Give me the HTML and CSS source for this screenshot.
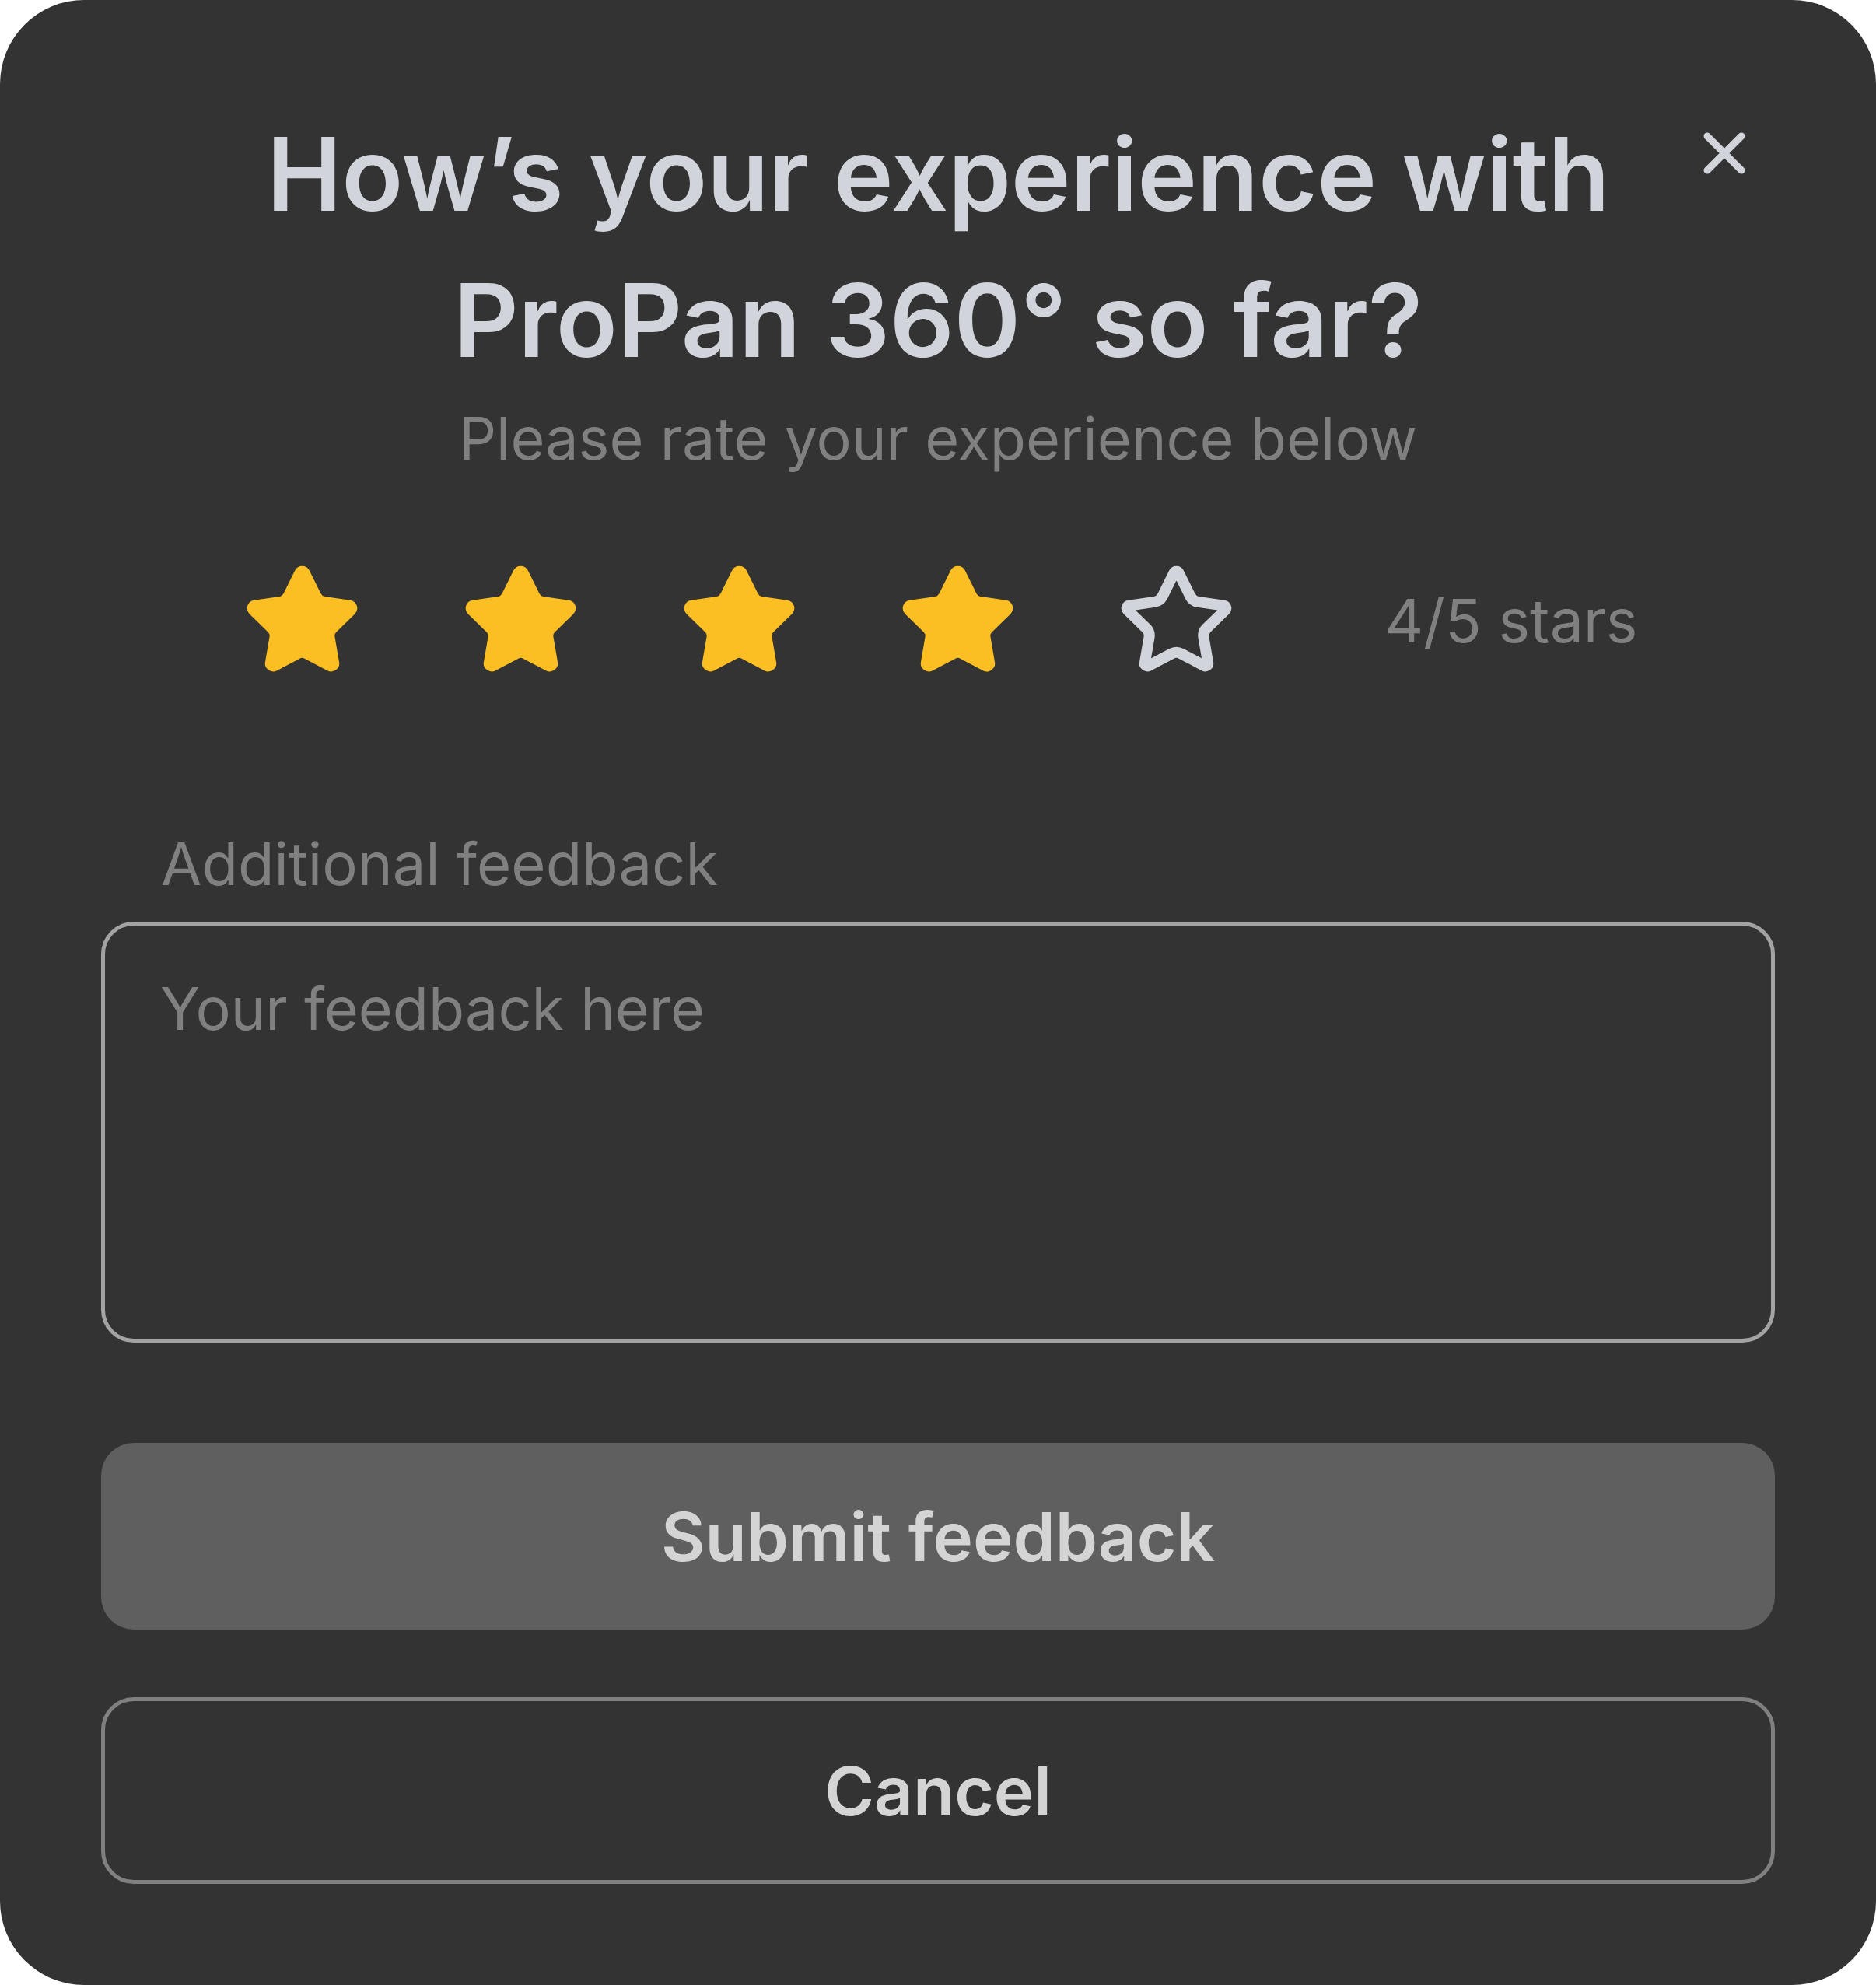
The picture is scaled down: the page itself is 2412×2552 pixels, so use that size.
FILE: index.html
```html
<!DOCTYPE html>
<html lang="en">
<head>
<meta charset="utf-8">
<title>Feedback</title>
<link rel="stylesheet" href="styles.css">
</head>
<body>
<div class="card">
  <button class="close" aria-label="Close">
    <svg viewBox="0 0 60 60" width="60" height="60"><path d="M8 8 52 52M52 8 8 52"/></svg>
  </button>
  <h1 class="title">How’s your experience with<br>ProPan 360° so far?</h1>
  <p class="subtitle">Please rate your experience below</p>
  <div class="rating">
    <div class="stars">
      <svg class="star filled" viewBox="0 0 24 24"><path d="M11.525 2.295a.53.53 0 0 1 .95 0l2.31 4.679a2.123 2.123 0 0 0 1.595 1.16l5.166.756a.53.53 0 0 1 .294.904l-3.736 3.638a2.123 2.123 0 0 0-.611 1.878l.882 5.14a.53.53 0 0 1-.771.56l-4.618-2.428a2.122 2.122 0 0 0-1.973 0L6.396 21.01a.53.53 0 0 1-.77-.56l.881-5.139a2.122 2.122 0 0 0-.611-1.879L2.16 9.795a.53.53 0 0 1 .294-.906l5.165-.755a2.122 2.122 0 0 0 1.597-1.160z"/></svg>
      <svg class="star filled" viewBox="0 0 24 24"><path d="M11.525 2.295a.53.53 0 0 1 .95 0l2.31 4.679a2.123 2.123 0 0 0 1.595 1.16l5.166.756a.53.53 0 0 1 .294.904l-3.736 3.638a2.123 2.123 0 0 0-.611 1.878l.882 5.14a.53.53 0 0 1-.771.56l-4.618-2.428a2.122 2.122 0 0 0-1.973 0L6.396 21.01a.53.53 0 0 1-.77-.56l.881-5.139a2.122 2.122 0 0 0-.611-1.879L2.16 9.795a.53.53 0 0 1 .294-.906l5.165-.755a2.122 2.122 0 0 0 1.597-1.160z"/></svg>
      <svg class="star filled" viewBox="0 0 24 24"><path d="M11.525 2.295a.53.53 0 0 1 .95 0l2.31 4.679a2.123 2.123 0 0 0 1.595 1.16l5.166.756a.53.53 0 0 1 .294.904l-3.736 3.638a2.123 2.123 0 0 0-.611 1.878l.882 5.14a.53.53 0 0 1-.771.56l-4.618-2.428a2.122 2.122 0 0 0-1.973 0L6.396 21.01a.53.53 0 0 1-.77-.56l.881-5.139a2.122 2.122 0 0 0-.611-1.879L2.16 9.795a.53.53 0 0 1 .294-.906l5.165-.755a2.122 2.122 0 0 0 1.597-1.160z"/></svg>
      <svg class="star filled" viewBox="0 0 24 24"><path d="M11.525 2.295a.53.53 0 0 1 .95 0l2.31 4.679a2.123 2.123 0 0 0 1.595 1.16l5.166.756a.53.53 0 0 1 .294.904l-3.736 3.638a2.123 2.123 0 0 0-.611 1.878l.882 5.14a.53.53 0 0 1-.771.56l-4.618-2.428a2.122 2.122 0 0 0-1.973 0L6.396 21.01a.53.53 0 0 1-.77-.56l.881-5.139a2.122 2.122 0 0 0-.611-1.879L2.16 9.795a.53.53 0 0 1 .294-.906l5.165-.755a2.122 2.122 0 0 0 1.597-1.160z"/></svg>
      <svg class="star empty" viewBox="0 0 24 24"><path d="M11.525 2.295a.53.53 0 0 1 .95 0l2.31 4.679a2.123 2.123 0 0 0 1.595 1.16l5.166.756a.53.53 0 0 1 .294.904l-3.736 3.638a2.123 2.123 0 0 0-.611 1.878l.882 5.14a.53.53 0 0 1-.771.56l-4.618-2.428a2.122 2.122 0 0 0-1.973 0L6.396 21.01a.53.53 0 0 1-.77-.56l.881-5.139a2.122 2.122 0 0 0-.611-1.879L2.16 9.795a.53.53 0 0 1 .294-.906l5.165-.755a2.122 2.122 0 0 0 1.597-1.160z"/></svg>
    </div>
    <span class="rating-text">4/5 stars</span>
  </div>
  <label class="field-label" for="fb">Additional feedback</label>
  <textarea id="fb" class="feedback" placeholder="Your feedback here"></textarea>
  <button class="btn btn-primary">Submit feedback</button>
  <button class="btn btn-secondary">Cancel</button>
</div>
</body>
</html>
```
FILE: styles.css
```css
html, body {
  margin: 0;
  background: #ffffff;
}

.card {
  position: relative;
  box-sizing: border-box;
  width: 2412px;
  height: 2552px;
  padding: 130px;
  background: #333333;
  border-radius: 108px;
  display: flex;
  flex-direction: column;
  font-family: Inter, "Noto Sans", sans-serif;
}

.close {
  position: absolute;
  top: 167px;
  right: 165px;
  width: 60px;
  height: 60px;
  padding: 0;
  border: none;
  background: none;
  cursor: pointer;
}

.close svg {
  display: block;
  fill: none;
  stroke: #D1D5DB;
  stroke-width: 9;
  stroke-linecap: round;
}

.title {
  margin: 0;
  font-size: 130px;
  line-height: 188px;
  font-weight: 600;
  letter-spacing: -0.4px;
  color: #D1D5DB;
  text-align: center;
}

.subtitle {
  margin: 0;
  font-size: 75.5px;
  line-height: 116px;
  color: #808080;
  text-align: center;
}

.rating {
  display: flex;
  align-items: center;
  justify-content: center;
  gap: 191px;
  padding-left: 6px;
  margin-top: 100px;
}

.stars {
  display: flex;
  gap: 128px;
}

.star {
  display: block;
  width: 153px;
  height: 153px;
  stroke-width: 2.2;
  stroke-linejoin: round;
  stroke-linecap: round;
}

.star.filled {
  fill: #FBBF24;
  stroke: #FBBF24;
}

.star.empty {
  fill: none;
  stroke: #D1D5DB;
}

.rating-text {
  font-size: 77px;
  line-height: 93px;
  color: #808080;
}

.field-label {
  margin-top: 189px;
  margin-bottom: 28px;
  padding-left: 77px;
  font-size: 76px;
  line-height: 93px;
  color: #808080;
}

.feedback {
  box-sizing: border-box;
  width: 100%;
  height: 541px;
  margin: 0;
  padding: 60px 71px;
  border: 5px solid #A3A3A3;
  border-radius: 42px;
  background: transparent;
  color: #D4D4D4;
  font-family: Inter, "Noto Sans", sans-serif;
  font-size: 75.5px;
  line-height: 93px;
  resize: none;
  outline: none;
}

.feedback::placeholder {
  color: #808080;
  opacity: 1;
}

.btn {
  box-sizing: border-box;
  width: 100%;
  height: 240px;
  margin: 0;
  border-radius: 42px;
  font-family: Inter, "Noto Sans", sans-serif;
  font-size: 87px;
  font-weight: 600;
  color: #D4D4D4;
  cursor: pointer;
}

.btn-primary {
  margin-top: 129px;
  background: #5F5F5F;
  border: none;
}

.btn-secondary {
  margin-top: 87px;
  background: transparent;
  border: 5px solid #808080;
}
```
